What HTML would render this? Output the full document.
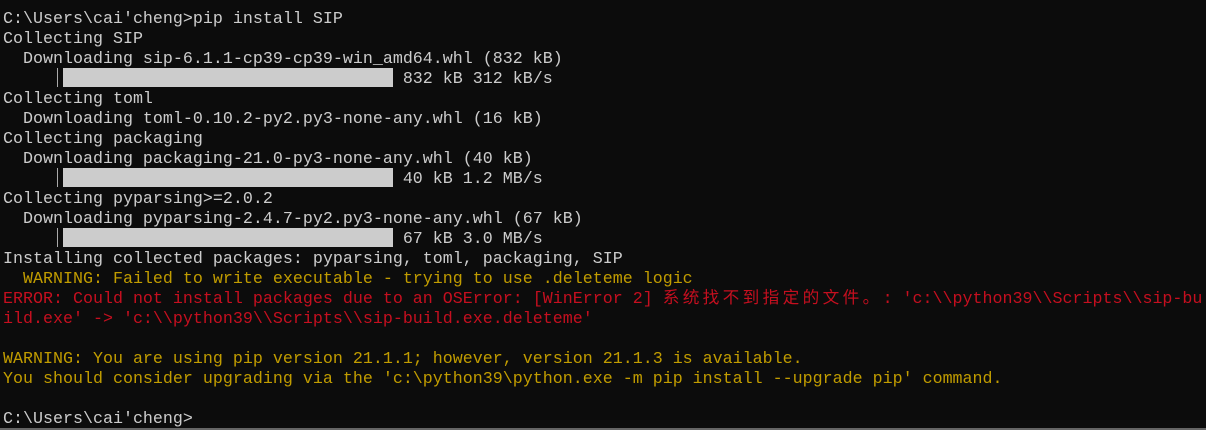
<!DOCTYPE html>
<html><head><meta charset="utf-8"><style>
html,body{margin:0;padding:0;}
body{width:1206px;height:430px;background:#0c0c0c;overflow:hidden;position:relative;}
pre{margin:0;position:absolute;left:3px;top:10px;font-family:"Liberation Mono","Noto Sans CJK SC",monospace;font-size:16.667px;line-height:20px;color:#cccccc;white-space:pre;}
.y{color:#c19c00}.r{color:#c50f1f}
.cj{letter-spacing:3.33px}
.bar{position:absolute;left:63px;width:330px;height:19px;background:#cccccc;}
.vl{position:absolute;left:57px;width:1px;height:19px;background:#aaa;}
.edge{position:absolute;left:0;right:0;bottom:0;height:2px;background:#666;}
</style></head><body>
<pre>C:\Users\cai'cheng&gt;pip install SIP
Collecting SIP
  Downloading sip-6.1.1-cp39-cp39-win_amd64.whl (832 kB)
                                        832 kB 312 kB/s
Collecting toml
  Downloading toml-0.10.2-py2.py3-none-any.whl (16 kB)
Collecting packaging
  Downloading packaging-21.0-py3-none-any.whl (40 kB)
                                        40 kB 1.2 MB/s
Collecting pyparsing&gt;=2.0.2
  Downloading pyparsing-2.4.7-py2.py3-none-any.whl (67 kB)
                                        67 kB 3.0 MB/s
Installing collected packages: pyparsing, toml, packaging, SIP
<span class="y">  WARNING: Failed to write executable - trying to use .deleteme logic</span>
<span class="r">ERROR: Could not install packages due to an OSError: [WinError 2] <span class="cj">系统找不到指定的文件。</span>: 'c:\\python39\\Scripts\\sip-bu
ild.exe' -&gt; 'c:\\python39\\Scripts\\sip-build.exe.deleteme'</span>

<span class="y">WARNING: You are using pip version 21.1.1; however, version 21.1.3 is available.
You should consider upgrading via the 'c:\python39\python.exe -m pip install --upgrade pip' command.</span>

C:\Users\cai'cheng&gt;</pre>
<div class="vl" style="top:68px"></div><div class="bar" style="top:68px"></div>
<div class="vl" style="top:168px"></div><div class="bar" style="top:168px"></div>
<div class="vl" style="top:228px"></div><div class="bar" style="top:228px"></div>
<div class="edge"></div>
</body></html>
